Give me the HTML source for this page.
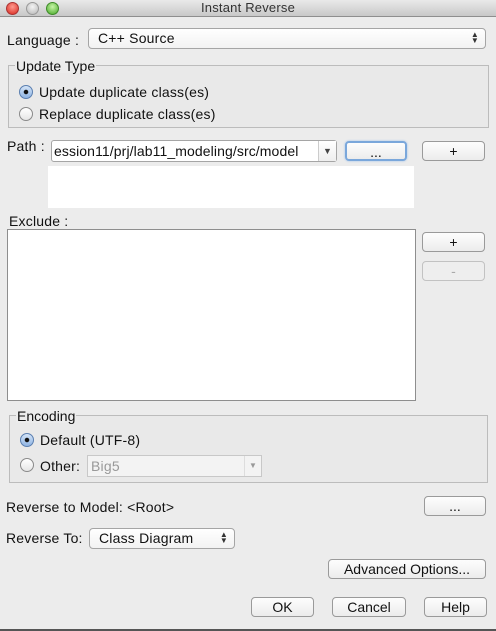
<!DOCTYPE html>
<html><head><meta charset="utf-8"><style>
*{box-sizing:border-box;margin:0;padding:0}
body{width:496px;height:631px;background:#ececec;font-family:"Liberation Sans",sans-serif;font-size:14px;color:#111;position:relative;overflow:hidden}
.a{position:absolute}
.t{position:absolute;white-space:nowrap;line-height:16px;letter-spacing:0.2px}
.btn{position:absolute;height:20px;border:1px solid #9a9a9a;border-radius:4px;background:linear-gradient(#fdfdfd,#ececec);text-align:center;line-height:18px;font-size:14px}
.sel{position:absolute;height:21px;border:1px solid #a5a5a5;border-radius:4px;background:linear-gradient(#fff,#f2f2f2);line-height:19px;padding-left:9px;letter-spacing:0.2px}
.grp{position:absolute;border:1px solid #bcbcbc;background:#e9e9e9}
.leg{position:absolute;background:#ececec;padding:0 1px;line-height:14px}
.rad{position:absolute;width:14px;height:14px;border-radius:50%;border:1px solid #8a8a8a;background:linear-gradient(#fff,#e6e6e6)}
.rad.on{border-color:#5b7fb0;background:radial-gradient(circle,#111 0 2px,transparent 2.5px),linear-gradient(#d4e4f7,#8fb4e3)}
.arr{position:absolute;right:6px;top:3px;font-size:8px;line-height:6px;color:#333}
</style></head><body>
<div class="a" style="left:0;top:0;width:496px;height:17px;background:linear-gradient(#e9e9e9,#c8c8c8);border-bottom:1px solid #8e8e8e"></div>
<div class="a" style="left:6px;top:2px;width:13px;height:13px;border-radius:50%;background:radial-gradient(circle at 50% 35%,#ff9a8f,#d8261c);border:1px solid #a33"></div>
<div class="a" style="left:26px;top:2px;width:13px;height:13px;border-radius:50%;background:radial-gradient(circle at 50% 35%,#f4f4f4,#b5b5b5);border:1px solid #999"></div>
<div class="a" style="left:46px;top:2px;width:13px;height:13px;border-radius:50%;background:radial-gradient(circle at 50% 35%,#c8f5a8,#45a826);border:1px solid #3f8a2a"></div>
<div class="t" style="left:0;width:496px;text-align:center;top:0;color:#333;font-size:13px">Instant Reverse</div>

<div class="t" style="left:7px;top:32px">Language :</div>
<div class="sel" style="left:88px;top:28px;width:398px">C++ Source<div class="arr">▲<br>▼</div></div>

<div class="grp" style="left:8px;top:65px;width:481px;height:63px"></div>
<div class="leg" style="left:15px;top:59px">Update Type</div>
<div class="rad on" style="left:19px;top:85px"></div>
<div class="t" style="left:39px;top:84px">Update duplicate class(es)</div>
<div class="rad" style="left:19px;top:107px"></div>
<div class="t" style="left:39px;top:106px">Replace duplicate class(es)</div>

<div class="t" style="left:7px;top:138px">Path :</div>
<div class="a" style="left:51px;top:140px;width:286px;height:22px;border:1px solid #a5a5a5;border-radius:3px;background:#fff"></div>
<div class="t" style="left:54px;top:143px;width:264px;overflow:hidden;font-size:14px;letter-spacing:0.1px">ession11/prj/lab11_modeling/src/model</div>
<div class="a" style="left:318px;top:141px;width:18px;height:20px;border-left:1px solid #ccc;background:linear-gradient(#fff,#eee);font-size:9px;text-align:center;line-height:20px;color:#444">▼</div>
<div class="btn" style="left:345px;top:141px;width:62px;border:2px solid #7aa7db;box-shadow:0 0 2px #9cc0ea">...</div>
<div class="btn" style="left:422px;top:141px;width:63px">+</div>
<div class="a" style="left:48px;top:166px;width:366px;height:42px;background:#fff"></div>

<div class="t" style="left:9px;top:213px">Exclude :</div>
<div class="a" style="left:7px;top:229px;width:409px;height:172px;border:1px solid #8e8e8e;background:#fff"></div>
<div class="btn" style="left:422px;top:232px;width:63px">+</div>
<div class="btn" style="left:422px;top:261px;width:63px;color:#aaa;border-color:#c2c2c2;background:#eeeeee">-</div>

<div class="grp" style="left:9px;top:415px;width:479px;height:68px"></div>
<div class="leg" style="left:16px;top:409px">Encoding</div>
<div class="rad on" style="left:20px;top:433px"></div>
<div class="t" style="left:40px;top:432px">Default (UTF-8)</div>
<div class="rad" style="left:20px;top:458px"></div>
<div class="t" style="left:40px;top:458px">Other:</div>
<div class="a" style="left:87px;top:455px;width:175px;height:22px;border:1px solid #c8c8c8;background:#f3f3f3"></div>
<div class="t" style="left:91px;top:458px;color:#999">Big5</div>
<div class="a" style="left:244px;top:456px;width:17px;height:20px;border-left:1px solid #ddd;font-size:8px;text-align:center;line-height:20px;color:#999">▼</div>

<div class="t" style="left:6px;top:499px">Reverse to Model: &lt;Root&gt;</div>
<div class="btn" style="left:424px;top:496px;width:62px">...</div>
<div class="t" style="left:6px;top:530px">Reverse To:</div>
<div class="sel" style="left:89px;top:528px;width:146px">Class Diagram<div class="arr">▲<br>▼</div></div>
<div class="btn" style="left:328px;top:559px;width:158px">Advanced Options...</div>
<div class="btn" style="left:251px;top:597px;width:63px">OK</div>
<div class="btn" style="left:332px;top:597px;width:74px">Cancel</div>
<div class="btn" style="left:424px;top:597px;width:63px">Help</div>
<div class="a" style="left:0;top:629px;width:496px;height:2px;background:#555"></div>
</body></html>
